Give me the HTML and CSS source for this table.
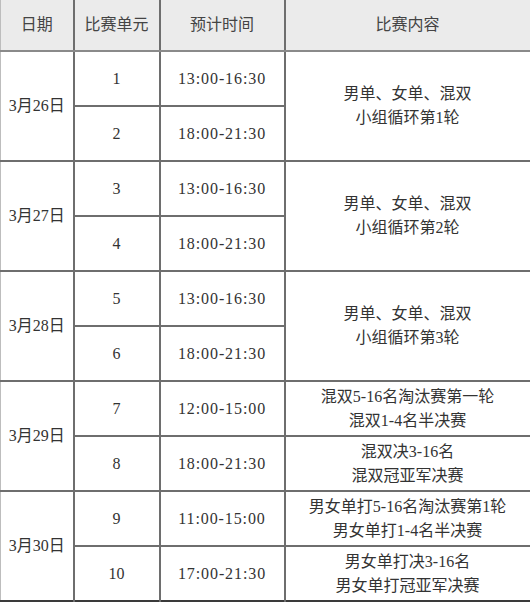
FILE: index.html
```html
<!DOCTYPE html>
<html lang="zh">
<head>
<meta charset="utf-8">
<link rel="stylesheet" href="styles.css">
</head>
<body>
<table class="sched">
  <colgroup>
    <col class="c-date"><col class="c-unit"><col class="c-time"><col class="c-content">
  </colgroup>
  <thead>
    <tr class="head"><th>日期</th><th>比赛单元</th><th>预计时间</th><th>比赛内容</th></tr>
  </thead>
  <tbody>
    <tr><td rowspan="2" class="date">3月26日</td><td>1</td><td class="time">13:00-16:30</td><td rowspan="2" class="content">男单、女单、混双<br>小组循环第1轮</td></tr>
    <tr><td>2</td><td class="time">18:00-21:30</td></tr>
    <tr><td rowspan="2" class="date">3月27日</td><td>3</td><td class="time">13:00-16:30</td><td rowspan="2" class="content">男单、女单、混双<br>小组循环第2轮</td></tr>
    <tr><td>4</td><td class="time">18:00-21:30</td></tr>
    <tr><td rowspan="2" class="date">3月28日</td><td>5</td><td class="time">13:00-16:30</td><td rowspan="2" class="content">男单、女单、混双<br>小组循环第3轮</td></tr>
    <tr><td>6</td><td class="time">18:00-21:30</td></tr>
    <tr><td rowspan="2" class="date">3月29日</td><td>7</td><td class="time">12:00-15:00</td><td class="content">混双5-16名淘汰赛第一轮<br>混双1-4名半决赛</td></tr>
    <tr><td>8</td><td class="time">18:00-21:30</td><td class="content">混双决3-16名<br>混双冠亚军决赛</td></tr>
    <tr><td rowspan="2" class="date">3月30日</td><td>9</td><td class="time">11:00-15:00</td><td class="content">男女单打5-16名淘汰赛第1轮<br>男女单打1-4名半决赛</td></tr>
    <tr><td>10</td><td class="time">17:00-21:30</td><td class="content">男女单打决3-16名<br>男女单打冠亚军决赛</td></tr>
  </tbody>
</table>
</body>
</html>
```
FILE: styles.css
```css
html, body {
  margin: 0;
  padding: 0;
  background: #ffffff;
}
.sched {
  width: 530px;
  table-layout: fixed;
  border-collapse: collapse;
  font-family: "Liberation Serif", "Noto Sans CJK SC", serif;
  font-size: 16px;
  color: #333333;
  border-left: 1px solid #bdbdbd;
  border-right: 2px solid #7a7a7a;
  border-bottom: 2px solid #3a3a3a;
}
.c-date { width: 73px; }
.c-unit { width: 86px; }
.c-time { width: 125px; }
.c-content { width: 246px; }
.sched th, .sched td {
  padding: 0;
  text-align: center;
  vertical-align: middle;
  line-height: 24px;
  border-left: 2px solid #6e6e6e;
  border-top: 2px solid #6e6e6e;
}
.sched th:first-child, .sched td.date { border-left: 1px solid #bdbdbd; }
.head {
  height: 51px;
  background: #ebebeb;
}
.head th {
  border-top: none;
  border-bottom: 2px solid #8a8a8a;
  font-weight: normal;
  color: #444444;
}
.sched tbody tr { height: 55px; }
.time { letter-spacing: 0.9px; }
.content { color: #333333; }
```
